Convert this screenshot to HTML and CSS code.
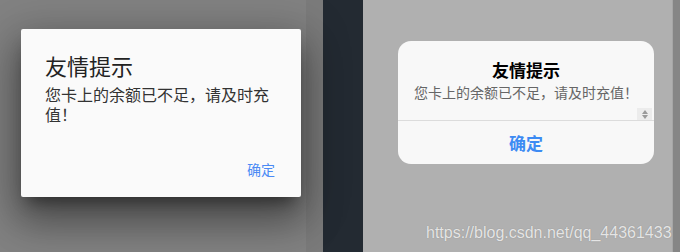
FILE: index.html
```html
<!DOCTYPE html>
<html lang="zh">
<head>
<meta charset="utf-8">
<link rel="stylesheet" href="styles.css">
</head>
<body>
<div class="screen">
  <section class="panel-left">
    <div class="md-dialog">
      <h2 class="md-title">友情提示</h2>
      <p class="md-body">您卡上的余额已不足，请及时充值！</p>
      <div class="md-actions"><button class="md-btn">确定</button></div>
    </div>
  </section>
  <div class="strip-mid"></div>
  <div class="strip-dark"></div>
  <section class="panel-right">
    <div class="ios-dialog">
      <div class="ios-title">友情提示</div>
      <div class="ios-msg">您卡上的余额已不足，请及时充值！</div>
      <div class="ios-spin-row">
        <span class="spin"><i class="tri-up"></i><i class="tri-down"></i></span>
      </div>
      <div class="ios-btn">确定</div>
    </div>
  </section>
  <div class="strip-edge"></div>
  <div class="strip-right"></div>
  <div class="watermark">https://blog.csdn.net/qq_44361433</div>
</div>
</body>
</html>
```

FILE: styles.css
```css
html, body {
  margin: 0;
  padding: 0;
}
body {
  width: 680px;
  height: 252px;
  overflow: hidden;
  font-family: "Noto Sans CJK SC", "Liberation Sans", sans-serif;
  text-spacing-trim: space-all;
}
.screen {
  position: relative;
  display: flex;
  width: 680px;
  height: 252px;
}
.panel-left {
  width: 306px;
  background: #828282;
  padding: 29px 0 0 21px;
  box-sizing: border-box;
}
.md-dialog {
  width: 280px;
  height: 168px;
  box-sizing: border-box;
  background: #fafafa;
  border-radius: 2px;
  box-shadow: 0 11px 15px -7px rgba(0,0,0,.45), 0 24px 38px 3px rgba(0,0,0,.3), 0 9px 46px 8px rgba(0,0,0,.2);
  padding: 20px 0 10px 24px;
  display: flex;
  flex-direction: column;
  position: relative;
  z-index: 1;
}
.md-title {
  margin: 0;
  font-size: 22px;
  font-weight: normal;
  line-height: 32px;
  color: #222;
}
.md-body {
  margin: 3px 0 0;
  width: 232px;
  font-size: 16px;
  line-height: 20px;
  color: #333;
}
.md-actions {
  margin-top: auto;
  display: flex;
  justify-content: flex-end;
  padding-right: 18px;
}
.md-btn {
  font-family: inherit;
  font-size: 14px;
  line-height: 36px;
  height: 36px;
  padding: 0 8px;
  border: 0;
  background: transparent;
  color: #4a8af5;
}
.strip-mid {
  width: 17px;
  background: #7b7b7b;
}
.strip-dark {
  width: 40px;
  background: #232a32;
}
.panel-right {
  width: 309px;
  background: #b0b0b0;
  padding: 41px 0 0 35px;
  box-sizing: border-box;
}
.ios-dialog {
  width: 256px;
  height: 123px;
  box-sizing: border-box;
  background: #f8f8f8;
  border-radius: 13px;
  padding-top: 17px;
  display: flex;
  flex-direction: column;
  overflow: hidden;
}
.ios-title {
  text-align: center;
  font-size: 17px;
  font-weight: bold;
  line-height: 24px;
  color: #000;
}
.ios-msg {
  text-align: center;
  font-size: 14px;
  line-height: 20px;
  color: #666;
  white-space: nowrap;
}
.ios-spin-row {
  height: 18px;
  display: flex;
  justify-content: flex-end;
  align-items: flex-end;
  padding-right: 2px;
  border-bottom: 1px solid #dcdcdc;
}
.spin {
  width: 15px;
  height: 12px;
  background: #ececec;
  display: flex;
  flex-direction: column;
  align-items: center;
  justify-content: center;
  gap: 1px;
}
.tri-up, .tri-down {
  width: 0;
  height: 0;
  border-left: 3.5px solid transparent;
  border-right: 3.5px solid transparent;
}
.tri-up { border-bottom: 4px solid #9a9a9a; }
.tri-down { border-top: 4px solid #9a9a9a; }
.ios-btn {
  flex: 1;
  display: flex;
  align-items: center;
  justify-content: center;
  font-size: 17px;
  font-weight: bold;
  color: #3d8bf3;
}
.strip-edge {
  width: 1px;
  background: #a6a6a6;
}
.strip-right {
  flex: 1;
  background: #868686;
}
.watermark {
  position: absolute;
  left: 426px;
  top: 222px;
  font-family: "Liberation Sans", Arial, sans-serif;
  font-size: 16px;
  line-height: 22px;
  color: rgba(255,255,255,0.78);
  text-shadow: 0 0 1px rgba(0,0,0,0.25);
  white-space: nowrap;
}
```
